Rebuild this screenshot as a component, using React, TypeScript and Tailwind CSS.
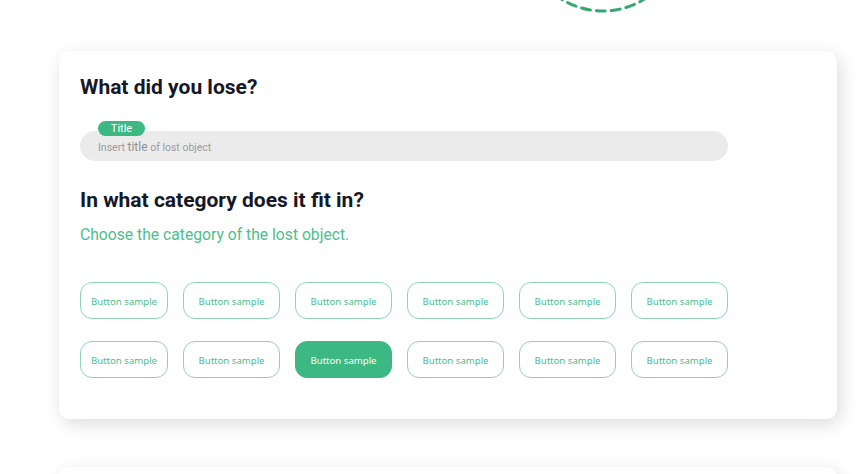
import React from "react";

const labels = Array.from({ length: 12 }, (_, i) => i);

export default function App() {
  return (
    <div className="relative w-[868px] h-[474px] overflow-hidden bg-white" style={{ fontFamily: "Roboto, 'Liberation Sans', sans-serif" }}>
      <svg className="absolute left-[520px] top-[-150px]" width="170" height="170" viewBox="0 0 170 170">
        <circle cx="83" cy="83" r="78" fill="none" stroke="#34a873" strokeWidth="3" strokeDasharray="9 6" strokeLinecap="round" />
      </svg>
      <div className="flex flex-col gap-[48px] pt-[51px] pl-[59px]">
        <div className="w-[778px] rounded-[10px] bg-white shadow-[3px_5px_18px_rgba(0,0,0,0.14)] pl-[21px] pt-[22px] pb-[41px]">
          <h2 className="text-[21px] leading-[28px] font-bold text-[#161827]">What did you lose?</h2>
          <div className="relative mt-[30px] w-[648px] h-[30px] rounded-full bg-[#ebebeb] flex items-center pl-[18px]">
            <span className="absolute left-[18px] top-[-10px] h-[15px] w-[47px] rounded-full bg-[#3cb883] text-white text-[11px] leading-[15px] text-center">Title</span>
            <span className="text-[10.5px] text-[#9c9c9c] pt-[2px]">Insert <span className="text-[12px] text-[#8f8f8f]">title</span> of lost object</span>
          </div>
          <h2 className="mt-[25px] text-[21px] leading-[28px] font-bold text-[#161827]">In what category does it fit in?</h2>
          <p className="mt-[10px] text-[15.7px] leading-[22px] text-[#4cbf8c]">Choose the category of the lost object.</p>
          <div className="mt-[36px] grid grid-cols-[88px_97px_97px_97px_97px_97px] gap-x-[15px] gap-y-[22px]" style={{ fontFamily: "'Noto Sans', 'Open Sans', sans-serif" }}>
            {labels.map((i) => {
              const active = i === 8;
              return (
                <button
                  key={i}
                  className={
                    active
                      ? "h-[37px] pt-[3px] rounded-[12px] bg-[#3cb883] border border-[#3cb883] text-white text-[9.6px]"
                      : "h-[37px] pt-[3px] rounded-[12px] bg-white border border-[#8fd3b4] text-[#4cbf8c] text-[9.6px]"
                  }
                >
                  Button sample
                </button>
              );
            })}
          </div>
        </div>
        <div className="w-[778px] h-[120px] rounded-[10px] bg-white shadow-[3px_5px_18px_rgba(0,0,0,0.14)]" />
      </div>
    </div>
  );
}
